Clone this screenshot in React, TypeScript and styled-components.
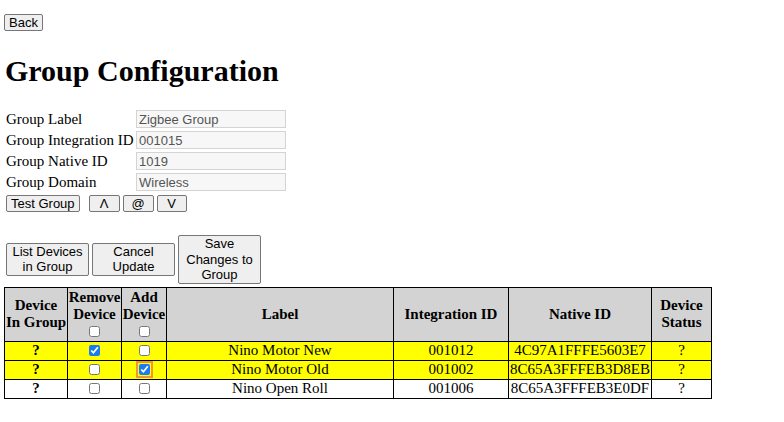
import { Fragment } from 'react';
import { createGlobalStyle, styled } from 'styled-components';

const GlobalStyle = createGlobalStyle`
    body {
        margin: 0;
        background: #ffffff;
        color: #000000;
        font-family: 'Liberation Serif', 'Times New Roman', serif;
        font-size: 15px;
    }
`;

const Page = styled.div`
    padding: 14px 4px 20px 4px;
`;

const Button = styled.button<{ width?: number }>`
    font-family: 'Liberation Sans', Arial, sans-serif;
    font-size: 13px;
    line-height: 15px;
    color: #000000;
    background: #efefef;
    border: 1px solid #767676;
    border-radius: 2px;
    padding: 0 4px;
    margin: 0;
    width: ${({ width }) => (width ? `${width}px` : 'auto')};
    cursor: pointer;
`;

const Title = styled.h1`
    font-size: 30px;
    font-weight: 700;
    margin: 22px 0 21px 1px;
    line-height: 36px;
`;

const FormGrid = styled.div`
    display: grid;
    grid-template-columns: 130px 150px;
    row-gap: 3px;
    padding-left: 2px;
`;

const FieldLabel = styled.label`
    font-size: 15px;
    line-height: 18px;
    white-space: nowrap;
`;

const FieldInput = styled.input`
    box-sizing: border-box;
    width: 150px;
    height: 18px;
    font-family: 'Liberation Sans', Arial, sans-serif;
    font-size: 13px;
    color: #545454;
    background: #f7f7f7;
    border: 1px solid #d4d4d4;
    padding: 0 2px;
    margin: 0;
`;

const ActionRow = styled.div`
    display: flex;
    align-items: center;
    gap: 3px;
    margin: 4px 0 0 2px;
`;

const Spacer = styled.span`
    width: 3px;
`;

const DeviceActions = styled.div`
    display: flex;
    align-items: center;
    gap: 3px;
    margin: 23px 0 3px 2px;
`;

const WrapButton = styled(Button)`
    width: 83px;
    line-height: 15.5px;
`;

const Table = styled.table`
    border-collapse: collapse;
    width: 708px;
    table-layout: fixed;
`;

const HeadCell = styled.th<{ width: number }>`
    width: ${({ width }) => width}px;
    background: #d3d3d3;
    border: 1px solid #000000;
    font-size: 15px;
    font-weight: 700;
    line-height: 17px;
    padding: 1px 0;
    text-align: center;
    vertical-align: middle;
    white-space: nowrap;
`;

const Row = styled.tr<{ highlight?: boolean }>`
    background: ${({ highlight }) => (highlight ? '#ffff00' : '#ffffff')};
`;

const Cell = styled.td<{ bold?: boolean }>`
    border: 1px solid #000000;
    font-size: 15px;
    line-height: 17px;
    height: 18px;
    padding: 0 1px;
    text-align: center;
    white-space: nowrap;
    font-weight: ${({ bold }) => (bold ? 700 : 400)};
`;

const Check = styled.input<{ focused?: boolean }>`
    width: 11px;
    height: 11px;
    margin: 0 3px;
    vertical-align: -1px;
    accent-color: #1a7cf3;
    outline: ${({ focused }) => (focused ? '2px solid #f0963a' : 'none')};
    outline-offset: 1px;
`;

const FIELDS = [
    { label: 'Group Label', value: 'Zigbee Group' },
    { label: 'Group Integration ID', value: '001015' },
    { label: 'Group Native ID', value: '1019' },
    { label: 'Group Domain', value: 'Wireless' }
];

const DEVICES = [
    { label: 'Nino Motor New', integration: '001012', native: '4C97A1FFFE5603E7', remove: true, add: false, highlight: true },
    { label: 'Nino Motor Old', integration: '001002', native: '8C65A3FFFEB3D8EB', remove: false, add: true, highlight: true, focused: true },
    { label: 'Nino Open Roll', integration: '001006', native: '8C65A3FFFEB3E0DF', remove: false, add: false, highlight: false }
];

const App = () => {
    return (
        <Page>
            <GlobalStyle />
            <Button>Back</Button>
            <Title>Group Configuration</Title>
            <FormGrid>
                {FIELDS.map((f) => (
                    <Fragment key={f.label}>
                        <FieldLabel>{f.label}</FieldLabel>
                        <FieldInput readOnly value={f.value} />
                    </Fragment>
                ))}
            </FormGrid>
            <ActionRow>
                <Button>Test Group</Button>
                <Spacer />
                <Button width={31}>Λ</Button>
                <Button width={31}>@</Button>
                <Button width={30}>V</Button>
            </ActionRow>
            <DeviceActions>
                <WrapButton>List Devices in Group</WrapButton>
                <WrapButton>Cancel Update</WrapButton>
                <WrapButton>Save Changes to Group</WrapButton>
            </DeviceActions>
            <Table>
                <thead>
                    <tr>
                        <HeadCell width={62}>
                            Device
                            <br />
                            In Group
                        </HeadCell>
                        <HeadCell width={53}>
                            Remove
                            <br />
                            Device
                            <br />
                            <Check type="checkbox" />
                        </HeadCell>
                        <HeadCell width={44}>
                            Add
                            <br />
                            Device
                            <br />
                            <Check type="checkbox" />
                        </HeadCell>
                        <HeadCell width={226}>Label</HeadCell>
                        <HeadCell width={114}>Integration ID</HeadCell>
                        <HeadCell width={142}>Native ID</HeadCell>
                        <HeadCell width={59}>
                            Device
                            <br />
                            Status
                        </HeadCell>
                    </tr>
                </thead>
                <tbody>
                    {DEVICES.map((d) => (
                        <Row key={d.label} highlight={d.highlight}>
                            <Cell bold>?</Cell>
                            <Cell>
                                <Check type="checkbox" defaultChecked={d.remove} />
                            </Cell>
                            <Cell>
                                <Check type="checkbox" defaultChecked={d.add} focused={d.focused} />
                            </Cell>
                            <Cell>{d.label}</Cell>
                            <Cell>{d.integration}</Cell>
                            <Cell>{d.native}</Cell>
                            <Cell>?</Cell>
                        </Row>
                    ))}
                </tbody>
            </Table>
        </Page>
    );
};

export default App;
